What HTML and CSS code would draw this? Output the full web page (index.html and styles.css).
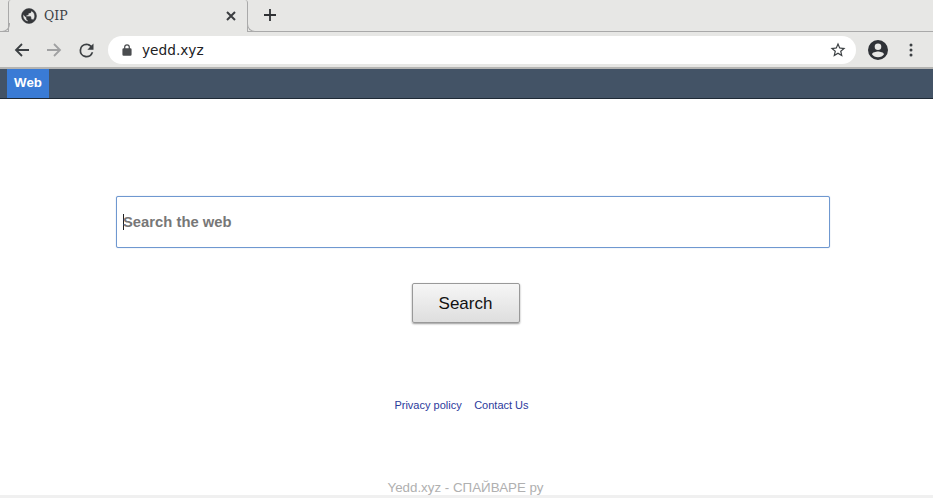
FILE: index.html
```html
<!DOCTYPE html>
<html lang="en">
<head>
<meta charset="utf-8">
<title>QIP</title>
<link rel="stylesheet" href="styles.css">
</head>
<body>
<header class="chrome">
  <div class="tabstrip">
    <div class="tab">
      <svg class="favicon" viewBox="0 0 16 16" width="16" height="16"><path fill="#35373a" stroke="#35373a" stroke-width=".5" fill-rule="evenodd" d="M8 .5a7.500 7.500 0 1 0 0 15 7.500 7.500 0 0 0 0-15zM2.200 6.500l3.300 3.200v1c0 .8.600 1.300 1.400 1.300v1.600A5.800 5.800 0 0 1 2.200 6.500zM12 12.200c-.2-.6-.7-1-1.300-1h-.8V9.100c0-.4-.3-.7-.7-.7H5.300V7h1.300c.4 0 .8-.3.8-.7V5h1.300c.8 0 1.300-.6 1.300-1.300v-1A5.800 5.800 0 0 1 12 12.200z"/></svg>
      <span class="tab-title">QIP</span>
      <svg class="tab-close" viewBox="0 0 10 10" width="10" height="10"><path d="M1 1l8 8M9 1l-8 8" stroke="#3b3d40" stroke-width="2" fill="none"/></svg>
    </div>
    <svg class="new-tab" viewBox="0 0 12 12" width="12" height="12"><path d="M6 0v12M0 6h12" stroke="#2f3134" stroke-width="1.800" fill="none"/></svg>
  </div>
  <div class="toolbar">
    <svg class="nav-icon" viewBox="0 0 16 16" width="16" height="16"><path d="M15 8H2M8 2L2 8l6 6" stroke="#3c4043" stroke-width="1.800" fill="none"/></svg>
    <svg class="nav-icon" viewBox="0 0 16 16" width="16" height="16"><path d="M1 8h13M8 2l6 6-6 6" stroke="#a0a1a2" stroke-width="1.800" fill="none"/></svg>
    <svg class="nav-icon reload" viewBox="0 0 24 24" width="21" height="21"><path fill="#3c4043" d="M17.650 6.350A7.960 7.960 0 0 0 12 4a8 8 0 1 0 7.740 10h-2.080A6 6 0 1 1 12 6c1.660 0 3.140.69 4.220 1.780L13 11h7V4l-2.350 2.350z"/></svg>
    <div class="omnibox">
      <svg class="lock" viewBox="0 0 12 14" width="10" height="12"><path fill="#4a4c4f" d="M10 5H9.500V3.500a3.500 3.500 0 0 0-7 0V5H2a1.500 1.500 0 0 0-1.500 1.500v6A1.500 1.500 0 0 0 2 14h8a1.500 1.500 0 0 0 1.500-1.500v-6A1.500 1.500 0 0 0 10 5zM4 5V3.500a2 2 0 0 1 4 0V5z"/></svg>
      <span class="url">yedd.xyz</span>
      <svg class="star" viewBox="0 0 24 24" width="18" height="18"><path fill="#3c4043" d="M22 9.240l-7.190-.62L12 2 9.190 8.630 2 9.240l5.460 4.730L5.820 21 12 17.270 18.180 21l-1.630-7.030L22 9.240zM12 15.400l-3.760 2.270 1-4.280-3.320-2.880 4.380-.38L12 6.100l1.710 4.040 4.380.38-3.320 2.880 1 4.280L12 15.400z"/></svg>
    </div>
    <svg class="avatar" viewBox="0 0 20 20" width="20" height="20"><path fill="#2f3237" d="M10 0a10 10 0 1 0 0 20 10 10 0 0 0 0-20zm0 3.500a3.300 3.300 0 1 1 0 6.600 3.300 3.300 0 0 1 0-6.600zm0 13.700c-2.600 0-4.900-1.200-6-3 .1-1.800 4-2.800 6-2.800s5.900 1 6 2.800c-1.100 1.800-3.400 3-6 3z"/></svg>
    <svg class="menu" viewBox="0 0 4 14" width="4" height="14"><circle cx="2" cy="2" r="1.500" fill="#3c4043"/><circle cx="2" cy="7" r="1.500" fill="#3c4043"/><circle cx="2" cy="12" r="1.500" fill="#3c4043"/></svg>
  </div>
</header>
<nav class="sitebar"><a class="sitebar-tab" href="#">Web</a></nav>
<main class="page">
  <div class="search-field"><span class="caret"></span><span class="placeholder">Search the web</span></div>
  <button class="search-button" type="button">Search</button>
  <div class="links"><a href="#">Privacy policy</a><a href="#">Contact Us</a></div>
  <div class="credit">Yedd.xyz - СПАЙВАРЕ ру</div>
</main>
</body>
</html>
```
FILE: styles.css
```css
* { box-sizing: border-box; }
html, body { margin: 0; height: 100%; overflow: hidden; background: #fff; }
body { font-family: "Liberation Sans", Arial, sans-serif; }

.chrome { background: #e7e7e5; }
.tabstrip {
  height: 32px;
  display: flex;
  align-items: center;
  border-bottom: 1px solid #a9a9a9;
}
.tab {
  position: relative;
  width: 240px;
  height: 32px;
  margin: 0 0 0 8px;
  padding: 0 11px 1px 12px;
  display: flex;
  align-items: center;
  align-self: flex-start;
  background: #e7e7e5;
  border-left: 1px solid #a9a9a9;
  border-right: 1px solid #a9a9a9;
  border-radius: 3px 3px 0 0;
}
.tab::before, .tab::after {
  content: "";
  position: absolute;
  bottom: 0;
  width: 9px;
  height: 8px;
  border-bottom: 1px solid #a9a9a9;
}
.tab::before { left: -9px; border-right: 1px solid #a9a9a9; border-bottom-right-radius: 8px; }
.tab::after { right: -10px; border-left: 1px solid #a9a9a9; border-bottom-left-radius: 8px; background: #e7e7e5; }
.favicon { flex: none; }
.tab-title {
  margin-left: 7px;
  flex: 1;
  font: 12.500px "DejaVu Serif", "Liberation Serif", serif;
  color: #3c4043;
}
.tab-close { flex: none; }
.new-tab { margin-left: 16px; margin-bottom: 1px; }

.toolbar {
  height: 37px;
  padding: 1px 20px 0 14px;
  display: flex;
  align-items: center;
  border-bottom: 2px solid #b4b4b2;
}
.nav-icon { flex: none; margin-right: 16px; }
.reload { margin-right: 11px; margin-left: -2px; }
.omnibox {
  flex: 1;
  height: 28px;
  display: flex;
  align-items: center;
  padding: 0 9px 0 14px;
  background: #fff;
  border-radius: 14px;
}
.lock { flex: none; }
.url {
  margin-left: 10px;
  flex: 1;
  font: 13.700px "DejaVu Sans", sans-serif;
  color: #202124;
}
.star { flex: none; }
.avatar { flex: none; margin-left: 12px; }
.menu { flex: none; margin-left: 21px; }

.sitebar {
  height: 30px;
  padding-left: 7px;
  display: flex;
  background: #435366;
  border-bottom: 1px solid #1f2a36;
}
.sitebar-tab {
  width: 42px;
  height: 29px;
  background: #3a7bd5;
  color: #fff;
  font-size: 13.300px;
  font-weight: bold;
  line-height: 28px;
  text-align: center;
  text-decoration: none;
}

.page {
  height: 399px;
  display: flex;
  flex-direction: column;
  align-items: center;
  padding-top: 97px;
  border-bottom: 3px solid #f0f0f0;
}
.search-field {
  width: 714px;
  height: 53px;
  margin-left: 13px;
  padding-left: 6px;
  display: flex;
  align-items: center;
  background: #fff;
  border: 1px solid #6f98d0;
  border-radius: 2px;
  box-shadow: 0 0 1px rgba(111,152,208,.7);
}
.caret { width: 1px; height: 16px; background: #222; margin-right: -1px; }
.placeholder { font-size: 14.800px; font-weight: bold; color: #777; }
.search-button {
  width: 108px;
  height: 41px;
  margin-top: 35px;
  margin-right: 2px;
  padding-top: 3px;
  font: 17px "Liberation Sans", Arial, sans-serif;
  color: #111;
  background: linear-gradient(#f6f6f6, #dedede);
  border: 1px solid #999;
  border-radius: 2px;
  box-shadow: 0 1px 2px rgba(0,0,0,.4);
}
.links {
  margin-top: 76px;
  margin-right: 10px;
  display: flex;
  gap: 12.500px;
  font-size: 11px;
}
.links a { color: #2b3a9c; text-decoration: none; }
.credit {
  margin-top: 69px;
  margin-right: 2px;
  font-size: 13.350px;
  color: #b0b0b0;
  line-height: 15px;
}
```
